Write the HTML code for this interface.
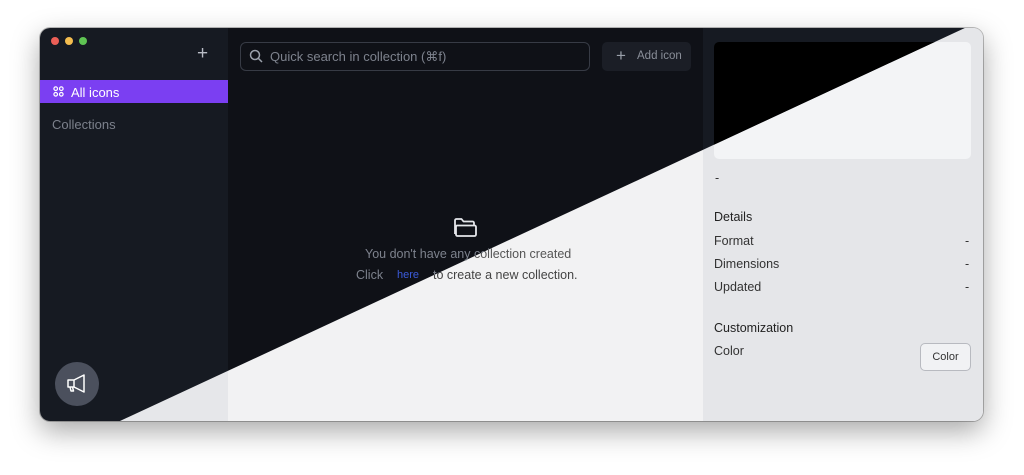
<!DOCTYPE html>
<html><head><meta charset="utf-8"><style>
*{margin:0;padding:0;box-sizing:border-box}
body{width:1024px;height:475px;background:#fff;position:relative;overflow:hidden;font-family:"Liberation Sans",sans-serif;font-size:12.5px}
.layer{position:absolute;left:0;top:0;width:1024px;height:475px}
.win{position:absolute;left:40px;top:28px;width:943px;height:393px;border-radius:10px;overflow:hidden}
.shadow{position:absolute;left:40px;top:28px;width:943px;height:393px;border-radius:10px;box-shadow:0 10px 28px rgba(0,0,0,.35),0 0 0 1px rgba(0,0,0,.25)}
.a{position:absolute;white-space:nowrap}
.side{position:absolute;left:0;top:0;width:188px;height:393px}
.main{position:absolute;left:188px;top:0;width:475px;height:393px}
.right{position:absolute;left:663px;top:0;width:280px;height:393px}
.dot{position:absolute;top:9px;width:8px;height:8px;border-radius:50%}
.D{clip-path:polygon(0 0,1025px 0,4px 475px,0 475px)}
.L .side{background:#e6e7ea}.L .main{background:#f2f2f3}.L .right{background:#e5e6e9}
.D .side{background:#161a22}.D .main{background:#0f1117}.D .right{background:#161a22}
</style></head><body>
<div class="shadow"></div>

<!-- LIGHT -->
<div class="layer L">
<div class="win">
 <div class="side">
  <div class="a" style="left:0;top:52px;width:188px;height:23px;background:#7b3ff2"></div>
  <div class="a" style="left:31px;top:57px;color:#fff;font-size:13px">All icons</div>
  <div class="a" style="left:12px;top:89px;color:#6b7280;font-size:13px">Collections</div>
  <div class="a" style="left:15px;top:334px;width:44px;height:44px;border-radius:50%;background:#9ca3af"></div>
 </div>
 <div class="main">
  <div class="a" style="left:12px;top:14px;width:350px;height:29px;border:1px solid #c9cbd0;border-radius:6px"></div>
  <div class="a" style="left:42px;top:21px;color:#888;font-size:13px">Quick search in collection (⌘f)</div>
  <div class="a" style="left:374px;top:14px;width:89px;height:29px;border-radius:5px;background:#e4e5e8"></div>
  <div class="a" style="left:137px;top:219px;color:#555;font-size:12.5px">You don't have any collection created</div>
  <div class="a" style="left:205px;top:240px;color:#444;font-size:12.5px">to create a new collection.</div>
 </div>
 <div class="right">
  <div class="a" style="left:11px;top:14px;width:257px;height:117px;border-radius:5px;background:#f3f4f6"></div>
  <div class="a" style="left:12px;top:143px;color:#333">-</div>
  <div class="a" style="left:11px;top:182px;color:#222">Details</div>
  <div class="a" style="left:11px;top:206px;color:#333">Format</div>
  <div class="a" style="left:11px;top:229px;color:#333">Dimensions</div>
  <div class="a" style="left:11px;top:252px;color:#333">Updated</div>
  <div class="a" style="left:262px;top:206px;color:#333">-</div>
  <div class="a" style="left:262px;top:229px;color:#333">-</div>
  <div class="a" style="left:262px;top:252px;color:#333">-</div>
  <div class="a" style="left:11px;top:293px;color:#222">Customization</div>
  <div class="a" style="left:11px;top:316px;color:#333">Color</div>
  <div class="a" style="left:217px;top:315px;width:51px;height:28px;border:1px solid #b8bac0;border-radius:5px;background:#f1f2f4;color:#333;font-size:11px;text-align:center;line-height:26px">Color</div>
 </div>
</div>
</div>

<!-- DARK -->
<div class="layer D">
<div class="win">
 <div class="side">
  <div class="dot" style="left:11px;background:#ec5f57"></div>
  <div class="dot" style="left:25px;background:#f4bd4f"></div>
  <div class="dot" style="left:39px;background:#5fc453"></div>
  <div class="a" style="left:157px;top:15px;color:#b8bcc5;font-size:19px;font-weight:300">+</div>
  <div class="a" style="left:0;top:52px;width:188px;height:23px;background:#7b3ff2"></div>
  <svg class="a" style="left:13px;top:58px" width="11" height="11" viewBox="0 0 11 11" fill="none" stroke="#fff" stroke-width="1.2"><circle cx="2.7" cy="2.7" r="1.8"/><circle cx="8.3" cy="2.7" r="1.8"/><circle cx="2.7" cy="8.3" r="1.8"/><circle cx="8.3" cy="8.3" r="1.8"/></svg>
  <div class="a" style="left:31px;top:57px;color:#fff;font-size:13px">All icons</div>
  <div class="a" style="left:12px;top:89px;color:#7c818c;font-size:13px">Collections</div>
  <div class="a" style="left:15px;top:334px;width:44px;height:44px;border-radius:50%;background:#4b505d"></div>
  <svg class="a" style="left:25px;top:345px" width="24" height="22" viewBox="0 0 24 22" fill="none" stroke="#fff" stroke-width="1.5" stroke-linejoin="round"><path d="M3 7h6l10-5v17l-10-5H3z"/><path d="M9 7v7"/><path d="M5 14l1 4h2.5l-1-4"/></svg>
 </div>
 <div class="main">
  <div class="a" style="left:12px;top:14px;width:350px;height:29px;border:1px solid #373b45;border-radius:6px"></div>
  <svg class="a" style="left:21px;top:21px" width="14" height="14" viewBox="0 0 14 14" fill="none" stroke="#9aa0aa" stroke-width="1.5"><circle cx="6" cy="6" r="4.5"/><path d="M9.3 9.3L13 13"/></svg>
  <div class="a" style="left:42px;top:21px;color:#7d828d;font-size:13px">Quick search in collection (⌘f)</div>
  <div class="a" style="left:374px;top:14px;width:89px;height:29px;border-radius:5px;background:#1b1e26"></div>
  <div class="a" style="left:388px;top:18px;color:#9aa0aa;font-size:17px;font-weight:300">+</div>
  <div class="a" style="left:409px;top:22px;color:#8a8f99;font-size:11.5px">Add icon</div>
  <svg class="a" style="left:225px;top:189px" width="25" height="21" viewBox="0 0 25 21" fill="none" stroke="#e5e7eb" stroke-width="1.8" stroke-linejoin="round"><path d="M2 17V3.5A1.5 1.5 0 0 1 3.5 2h5l2 2.5h9A1.5 1.5 0 0 1 21 6v2"/><path d="M4 8.5h17.5A1.5 1.5 0 0 1 23 10v7.5A1.5 1.5 0 0 1 21.5 19h-17A1.5 1.5 0 0 1 3 17.5V10A1.5 1.5 0 0 1 4 8.5z"/></svg>
  <div class="a" style="left:137px;top:219px;color:#7d828d;font-size:12.5px">You don't have any collection created</div>
  <div class="a" style="left:128px;top:240px;color:#7d828d;font-size:12.5px">Click</div>
  <div class="a" style="left:169px;top:241px;color:#3b5bdb;font-size:11px">here</div>
  <div class="a" style="left:205px;top:240px;color:#7d828d;font-size:12.5px">to create a new collection.</div>
 </div>
 <div class="right">
  <div class="a" style="left:11px;top:14px;width:257px;height:117px;border-radius:5px;background:#000"></div>
 </div>
</div>
</div>
</body></html>
